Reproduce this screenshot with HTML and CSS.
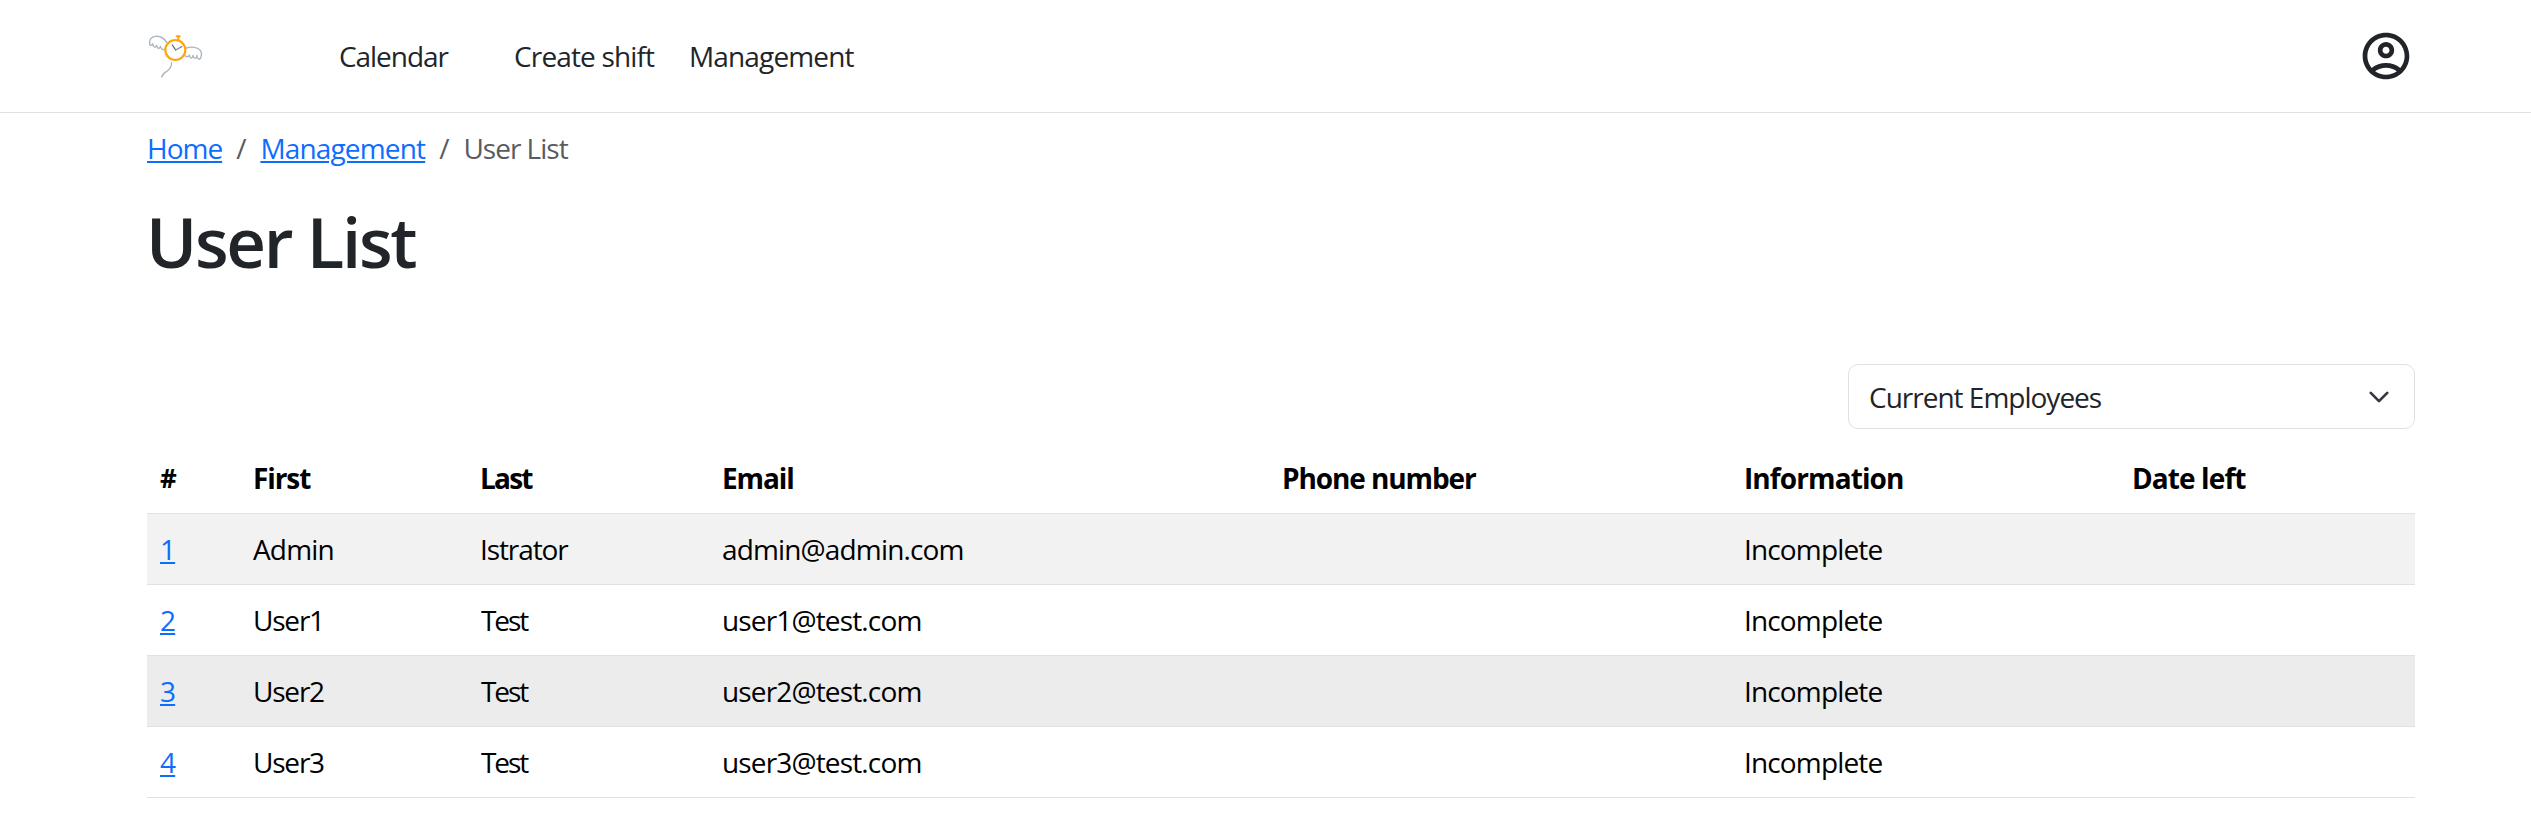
FILE: index.html
```
<!DOCTYPE html>
<html lang="en">
<head>
<meta charset="utf-8">
<title>User List</title>
<link rel="stylesheet" href="styles.css">
</head>
<body>
<header class="topbar">
  <svg class="logo" viewBox="51 33 174 150" fill="none" stroke-linecap="round" stroke-linejoin="round">
    <g stroke="#adb5bd" stroke-width="4">
      <path d="M110 67C102 54 88 48 76 49C63 50 57 60 59 73C61 77 66 77 68 71C69 81 75 86 80 76C82 86 88 89 91 79C94 88 100 91 105 87"/>
      <path d="M169 84C184 79 204 81 211 91C217 100 214 113 209 118C203 117 200 112 201 106C199 117 193 119 189 106C187 117 181 117 178 105C175 112 170 111 166 107"/>
      <path d="M125 128C125 140 119 148 110 154C101 159 97 163 95 171"/>
    </g>
    <circle cx="136" cy="90" r="30" stroke="#ffa50a" stroke-width="6.5"/>
    <path d="M145 58V50M140 49H149" stroke="#ffa50a" stroke-width="6"/>
    <path d="M127 75L137 90" stroke="#5c6670" stroke-width="4"/>
    <path d="M137 90L155 80" stroke="#868e96" stroke-width="4"/>
  </svg>
  <nav class="nav">
    <a class="nav-calendar">Calendar</a>
    <a class="nav-shift">Create shift</a>
    <a class="nav-management">Management</a>
  </nav>
  <svg class="account" viewBox="0 0 24 24" fill="currentColor">
    <path d="M12 2C6.48 2 2 6.48 2 12s4.48 10 10 10 10-4.48 10-10S17.52 2 12 2zM7.35 18.5C8.66 17.56 10.26 17 12 17s3.34.56 4.65 1.5C15.34 19.44 13.74 20 12 20s-3.34-.56-4.65-1.5zm10.79-1.38C16.45 15.8 14.32 15 12 15s-4.45.8-6.14 2.12C4.7 15.73 4 13.95 4 12c0-4.42 3.58-8 8-8s8 3.58 8 8c0 1.95-.7 3.73-1.86 5.12z"/>
    <path d="M12 6c-1.93 0-3.5 1.57-3.5 3.5S10.07 13 12 13s3.5-1.57 3.5-3.5S13.93 6 12 6zm0 5c-.83 0-1.5-.67-1.5-1.5S11.17 8 12 8s1.5.67 1.5 1.5S12.83 11 12 11z"/>
  </svg>
</header>
<main class="container">
  <div class="breadcrumb">
    <a class="link crumb-home" href="#">Home</a>
    <span>/</span>
    <a class="link crumb-management" href="#">Management</a>
    <span>/</span>
    <span class="crumb-current">User List</span>
  </div>
  <h1 class="title">User List</h1>
  <div class="filter">
    <div class="select">
      <span>Current Employees</span>
      <svg class="chevron" viewBox="0 0 16 16" fill="none" stroke="#343a40" stroke-width="2" stroke-linecap="round" stroke-linejoin="round"><path d="m2 5 6 6 6-6"/></svg>
    </div>
  </div>
  <table class="users">
    <colgroup><col class="c-id"><col class="c-first"><col class="c-last"><col class="c-email"><col class="c-phone"><col class="c-info"><col></colgroup>
    <thead>
      <tr><th class="h-id">#</th><th>First</th><th class="h-last">Last</th><th>Email</th><th>Phone number</th><th class="h-info">Information</th><th class="h-info">Date left</th></tr>
    </thead>
    <tbody>
      <tr class="striped"><td><a class="link" href="#">1</a></td><td>Admin</td><td class="istrator">Istrator</td><td>admin@admin.com</td><td></td><td>Incomplete</td><td></td></tr>
      <tr><td><a class="link" href="#">2</a></td><td class="user">User1</td><td class="test">Test</td><td>user1@test.com</td><td></td><td>Incomplete</td><td></td></tr>
      <tr class="hovered"><td><a class="link" href="#">3</a></td><td class="user">User2</td><td class="test">Test</td><td>user2@test.com</td><td></td><td>Incomplete</td><td></td></tr>
      <tr><td><a class="link" href="#">4</a></td><td class="user">User3</td><td class="test">Test</td><td>user3@test.com</td><td></td><td>Incomplete</td><td></td></tr>
    </tbody>
  </table>
</main>
</body>
</html>
```
FILE: styles.css
```
* { box-sizing: border-box; }

body {
  margin: 0;
  background: #fff;
  color: #212529;
  font: 400 28px/42px "Open Sans", "Noto Sans", sans-serif;
}

.topbar {
  display: flex;
  align-items: center;
  height: 113px;
  padding: 0 117px 0 147px;
  border-bottom: 1px solid #dee2e6;
}
.logo { width: 58px; height: 50px; }
.nav {
  display: grid;
  grid-template-columns: 175px 175px auto;
  margin-left: 134px;
}
.nav-calendar { letter-spacing: -1.05px; }
.nav-shift { letter-spacing: -.85px; }
.nav-management { letter-spacing: -.85px; }
.account { width: 56px; height: 56px; margin-left: auto; }

.container { padding: 14px 116px 0 147px; }

.link {
  color: #0d6efd;
  text-decoration: underline;
  text-decoration-thickness: 2px;
  text-underline-offset: 2px;
}

.breadcrumb { display: flex; gap: 14px; color: #595c5f; }
.crumb-home { letter-spacing: -1px; }
.crumb-management { letter-spacing: -.85px; }
.crumb-current { letter-spacing: -1px; }

.title {
  margin: 30px 0 81px -1px;
  font-size: 69px;
  font-weight: 600;
  line-height: 84px;
  letter-spacing: -2.3px;
}

.filter { display: flex; justify-content: flex-end; }
.select {
  display: flex;
  align-items: center;
  justify-content: space-between;
  width: 567px;
  height: 65px;
  padding: 0 24px 0 20px;
  border: 1px solid #dee2e6;
  border-radius: 10px;
  letter-spacing: -1px;
}
.chevron { width: 22px; height: 22px; }

.users {
  width: 2268px;
  margin-top: 14px;
  border-collapse: separate;
  border-spacing: 0;
  table-layout: fixed;
  color: #000;
}
.users th,
.users td {
  height: 71px;
  padding: 14px 13px;
  border-bottom: 1px solid #dee2e6;
  text-align: left;
}
.users th { font-weight: 700; letter-spacing: -1.1px; }
.users td { letter-spacing: -.85px; }
.users .h-id { letter-spacing: -2px; font-size: 26px; }
.users .h-last { letter-spacing: -1.8px; }
.users .h-info { letter-spacing: -.9px; }
.users .istrator { letter-spacing: -1.1px; }
.users .user { letter-spacing: -1.2px; }
.users .test { padding-left: 14px; letter-spacing: -2.1px; }
.striped { background: #f2f2f2; }
.hovered { background: #ececec; }

.c-id { width: 93px; }
.c-first { width: 227px; }
.c-last { width: 242px; }
.c-email { width: 560px; }
.c-phone { width: 462px; }
.c-info { width: 388px; }
```
